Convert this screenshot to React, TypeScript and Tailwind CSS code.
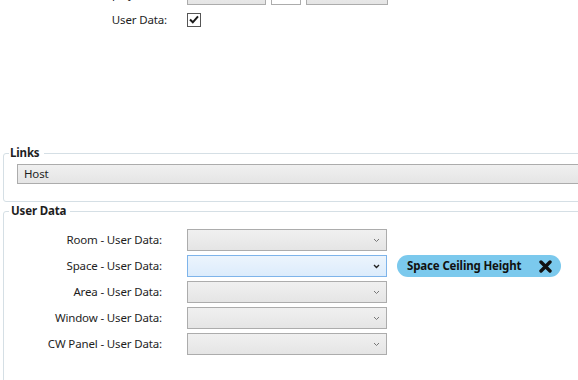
import React from "react";

const Chevron = ({ dark }: { dark?: boolean }) => (
  <svg width="7" height="5" viewBox="0 0 7 5">
    <path d="M1 1 L3.5 3.5 L6 1" fill="none" stroke={dark ? "#222" : "#777"} strokeWidth={dark ? 1.4 : 1} />
  </svg>
);

const Combo = ({ focused }: { focused?: boolean }) => (
  <div
    className={
      focused
        ? "w-[200px] h-[22px] border border-[#7eb4ea] bg-linear-to-b from-[#ecf4fc] to-[#dcecfc] flex items-center justify-end pr-[6px]"
        : "w-[200px] h-[22px] border border-[#acacac] bg-linear-to-b from-[#f0f0f0] to-[#e5e5e5] flex items-center justify-end pr-[6px]"
    }
  >
    <Chevron dark={focused} />
  </div>
);

const rows = [
  "Room - User Data:",
  "Space - User Data:",
  "Area - User Data:",
  "Window - User Data:",
  "CW Panel - User Data:",
];

export default function App() {
  return (
    <div className="w-[578px] h-[380px] overflow-hidden bg-white text-[11.5px] tracking-[-0.15px] leading-[16px] text-[#1e1e1e] font-['Segoe_UI','Noto_Sans',sans-serif]">
      <div className="h-[145px] flex flex-col">
        <div className="-mt-[17px] flex items-center h-[22px] shrink-0">
          <div className="w-[167px] text-right">Display Units:</div>
          <div className="ml-[20px] w-[79px] h-[22px] border border-[#acacac] bg-linear-to-b from-[#f0f0f0] to-[#e5e5e5]" />
          <div className="ml-[5px] w-[30px] h-[22px] border border-[#acacac] bg-white" />
          <div className="ml-[5px] w-[82px] h-[22px] border border-[#acacac] bg-linear-to-b from-[#f0f0f0] to-[#e5e5e5]" />
        </div>
        <div className="mt-[6px] flex items-center h-[17px] shrink-0">
          <div className="w-[167px] text-right">User Data:</div>
          <div className="ml-[20px] w-[14px] h-[14px] border border-[#555] bg-white flex items-center justify-center">
            <svg width="10" height="9" viewBox="0 0 10 9">
              <path d="M1 4.5 L3.8 7.3 L9 1.3" fill="none" stroke="#1a1a1a" strokeWidth="2" />
            </svg>
          </div>
        </div>
      </div>

      <fieldset className="ml-[3px] w-[620px] border border-[#d5dfe5] rounded-[3px] pl-[5px] pb-[17px]">
        <legend className="pl-[1px] pr-[4px] font-bold">Links</legend>
        <div className="mt-[3px] ml-[8px] h-[20px] border border-[#acacac] bg-linear-to-b from-[#f0f0f0] to-[#e5e5e5] flex items-center pl-[6px]">
          Host
        </div>
      </fieldset>

      <fieldset className="mt-[1px] ml-[3px] w-[620px] h-[220px] border border-[#d5dfe5] rounded-[3px] pl-[5px]">
        <legend className="pl-[2px] pr-[4px] font-bold">User Data</legend>
        <div className="mt-[10px] flex flex-col gap-[4px]">
          {rows.map((r, i) => (
            <div key={r} className="flex items-center h-[22px]">
              <div className="w-[153px] text-right">{r}</div>
              <div className="ml-[25px]">
                <Combo focused={i === 1} />
              </div>
              {i === 1 && (
                <div className="ml-[10px] w-[164px] h-[22px] rounded-full bg-[#7bc9ed] flex items-center justify-between pl-[10px] pr-[9px] font-bold text-[#111]">
                  <span>Space Ceiling Height</span>
                  <svg width="13" height="13" viewBox="0 0 13 13">
                    <path d="M2 2 L11 11 M11 2 L2 11" stroke="#111" strokeWidth="3.4" strokeLinecap="round" />
                  </svg>
                </div>
              )}
            </div>
          ))}
        </div>
      </fieldset>
    </div>
  );
}
